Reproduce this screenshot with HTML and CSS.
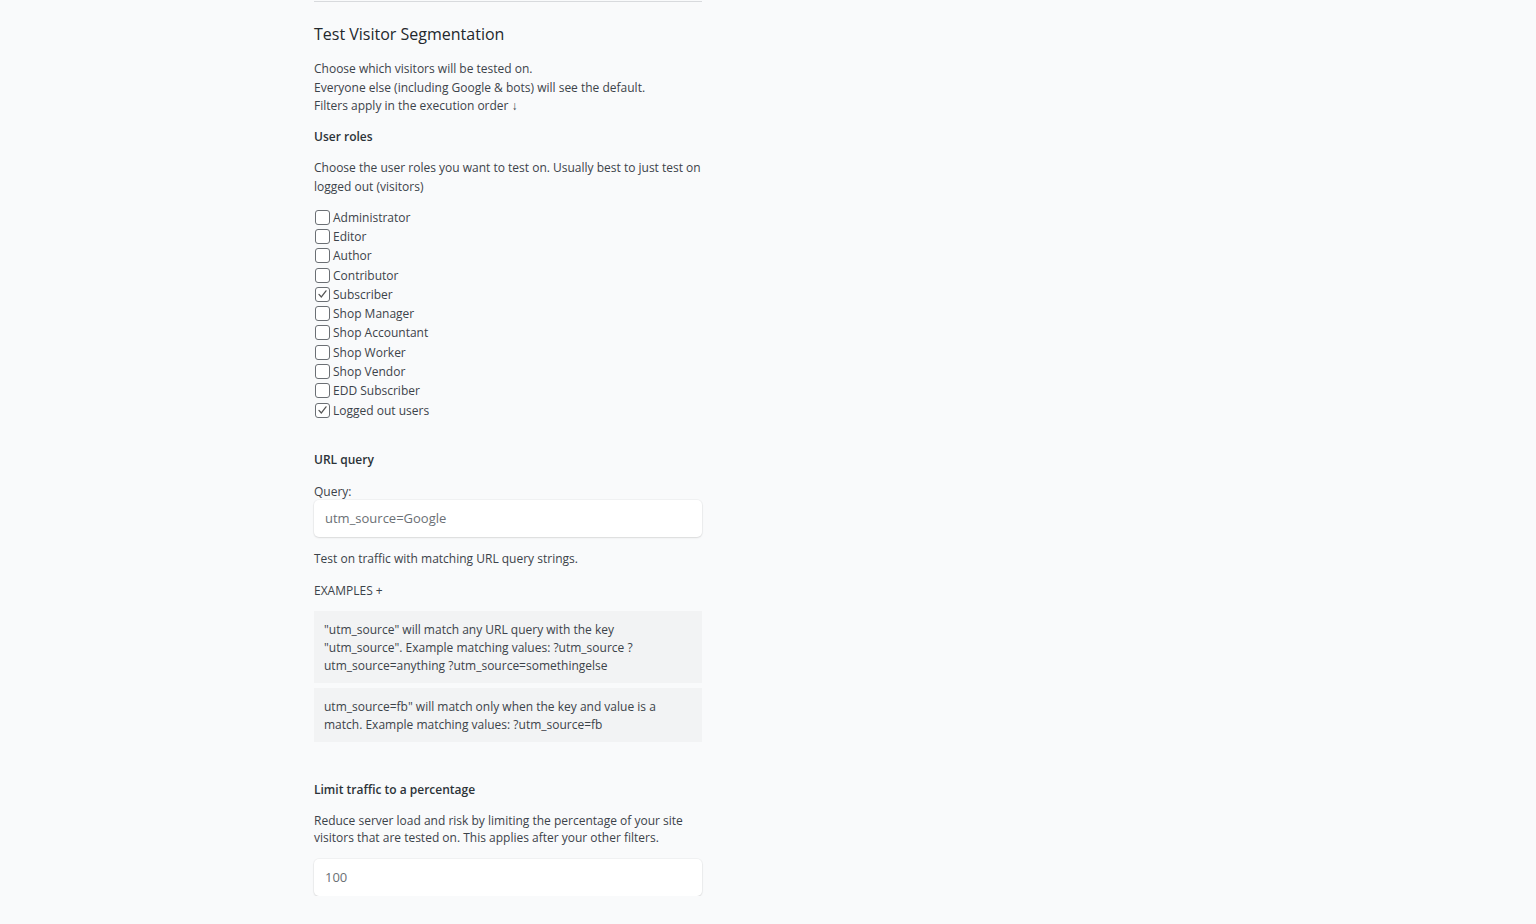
FILE: index.html
```html
<!DOCTYPE html>
<html>
<head>
<meta charset="utf-8">
<link rel="stylesheet" href="styles.css">
</head>
<body>
<div class="col">
  <div class="rule"></div>
  <h2 class="title">Test Visitor Segmentation</h2>
  <p class="intro">Choose which visitors will be tested on.<br>Everyone else (including Google &amp; bots) will see the default.<br>Filters apply in the execution order ↓</p>

  <h3 class="sub">User roles</h3>
  <p class="desc">Choose the user roles you want to test on. Usually best to just test on logged out (visitors)</p>
  <ul class="roles">
    <li><span class="box"></span>Administrator</li>
    <li><span class="box"></span>Editor</li>
    <li><span class="box"></span>Author</li>
    <li><span class="box"></span>Contributor</li>
    <li><span class="box on"><svg viewBox="0 0 14 14" width="14" height="14"><path d="M3.2 7.4 L5.8 10.2 L10.8 3.6" fill="none" stroke="#555" stroke-width="1.4" stroke-linecap="round" stroke-linejoin="round"/></svg></span>Subscriber</li>
    <li><span class="box"></span>Shop Manager</li>
    <li><span class="box"></span>Shop Accountant</li>
    <li><span class="box"></span>Shop Worker</li>
    <li><span class="box"></span>Shop Vendor</li>
    <li><span class="box"></span>EDD Subscriber</li>
    <li><span class="box on"><svg viewBox="0 0 14 14" width="14" height="14"><path d="M3.2 7.4 L5.8 10.2 L10.8 3.6" fill="none" stroke="#555" stroke-width="1.4" stroke-linecap="round" stroke-linejoin="round"/></svg></span>Logged out users</li>
  </ul>

  <h3 class="sub url">URL query</h3>
  <label class="lbl">Query:</label>
  <div class="field">utm_source=Google</div>
  <p class="note">Test on traffic with matching URL query strings.</p>
  <div class="examples">EXAMPLES +</div>
  <div class="ex">"utm_source" will match any URL query with the key "utm_source". Example matching values: ?utm_source ?utm_source=anything ?utm_source=somethingelse</div>
  <div class="ex">utm_source=fb" will match only when the key and value is a match. Example matching values: ?utm_source=fb</div>

  <h3 class="sub limit">Limit traffic to a percentage</h3>
  <p class="desc2">Reduce server load and risk by limiting the percentage of your site visitors that are tested on. This applies after your other filters.</p>
  <div class="field">100</div>
</div>
</body>
</html>
```
FILE: styles.css
```css
html, body {
  margin: 0;
  padding: 0;
  background: #f9fafb;
}
body {
  font-family: "Open Sans", "Noto Sans", sans-serif;
  color: #3c434a;
  font-size: 12px;
}
.col {
  width: 388px;
  margin-left: 314px;
  display: flex;
  flex-direction: column;
}
.rule {
  height: 1px;
  background: #d8dadd;
  margin-top: 1px;
}
.title {
  margin: 21px 0 0;
  font-size: 16px;
  font-weight: 500;
  line-height: 22px;
  color: #23282d;
}
.intro {
  margin: 15px 0 0;
  line-height: 18.5px;
}
.sub {
  margin: 12px 0 0;
  font-size: 12px;
  font-weight: 600;
  line-height: 18px;
  color: #2c3338;
}
.desc {
  margin: 12px 0 0;
  line-height: 19px;
}
.roles {
  list-style: none;
  margin: 12px 0 0;
  padding: 0;
}
.roles li {
  display: flex;
  align-items: center;
  height: 19.3px;
  gap: 3px;
}
.box {
  width: 13px;
  height: 13px;
  border: 1px solid #6b6f74;
  border-radius: 3px;
  background: #fff;
  margin-left: 1px;
  box-sizing: content-box;
  display: flex;
  align-items: center;
  justify-content: center;
}
.box svg { display: block; }
.url { margin-top: 31px; }
.lbl {
  margin-top: 15px;
  line-height: 16px;
}
.field {
  margin-top: 0;
  height: 37px;
  background: #fff;
  border-radius: 5px;
  box-shadow: 0 1px 2px rgba(0,0,0,0.1), 0 0 0 1px rgba(0,0,0,0.03);
  box-sizing: border-box;
  padding: 0 11px;
  display: flex;
  align-items: center;
  font-size: 13px;
  color: #6b7075;
}
.note {
  margin: 12px 0 0;
  line-height: 19px;
}
.examples {
  margin-top: 14px;
  line-height: 18px;
}
.ex {
  margin-top: 5px;
  background: #f2f3f4;
  padding: 10px 10px 8px;
  line-height: 18px;
}
.examples + .ex { margin-top: 11px; }
.limit { margin-top: 39px; }
.desc2 {
  margin: 13px 0 0;
  line-height: 17.5px;
}
.desc2 + .field { margin-top: 12px; }
```
